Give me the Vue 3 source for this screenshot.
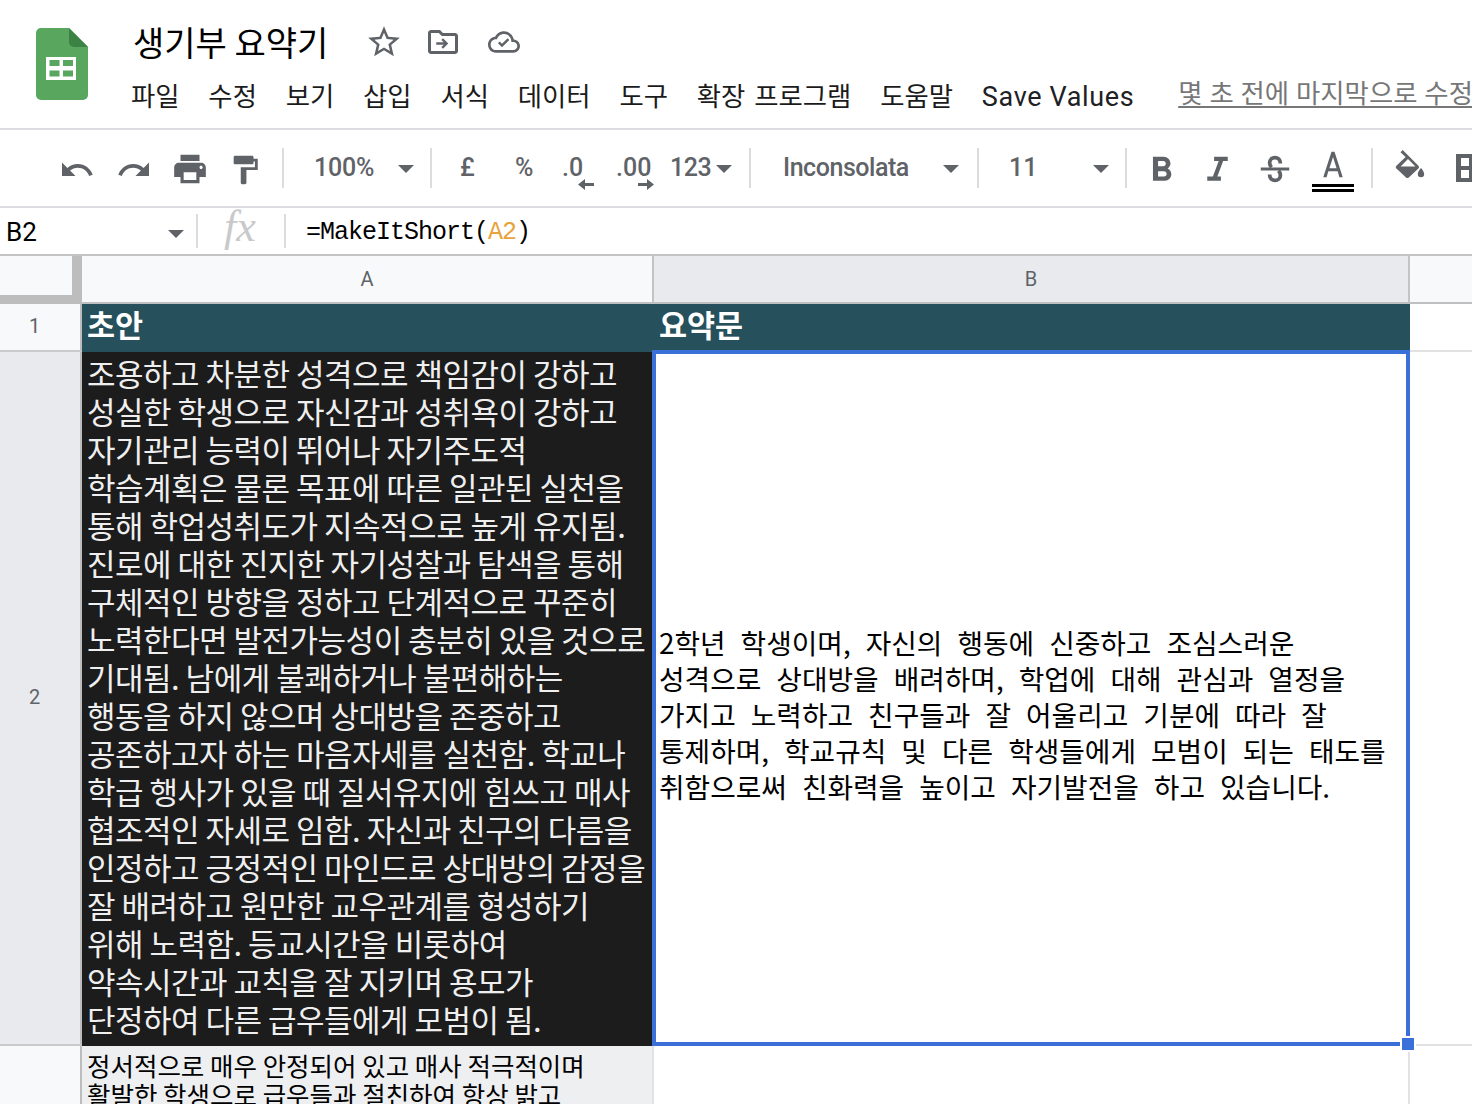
<script setup>
const menus = ['파일','수정','보기','삽입','서식','데이터','도구','확장 프로그램','도움말']
const draft = ['조용하고 차분한 성격으로 책임감이 강하고','성실한 학생으로 자신감과 성취욕이 강하고','자기관리 능력이 뛰어나 자기주도적','학습계획은 물론 목표에 따른 일관된 실천을','통해 학업성취도가 지속적으로 높게 유지됨.','진로에 대한 진지한 자기성찰과 탐색을 통해','구체적인 방향을 정하고 단계적으로 꾸준히','노력한다면 발전가능성이 충분히 있을 것으로','기대됨. 남에게 불쾌하거나 불편해하는','행동을 하지 않으며 상대방을 존중하고','공존하고자 하는 마음자세를 실천함. 학교나','학급 행사가 있을 때 질서유지에 힘쓰고 매사','협조적인 자세로 임함. 자신과 친구의 다름을','인정하고 긍정적인 마인드로 상대방의 감정을','잘 배려하고 원만한 교우관계를 형성하기','위해 노력함. 등교시간을 비롯하여','약속시간과 교칙을 잘 지키며 용모가','단정하여 다른 급우들에게 모범이 됨.']
const summary = ['2학년 학생이며, 자신의 행동에 신중하고 조심스러운','성격으로 상대방을 배려하며, 학업에 대해 관심과 열정을','가지고 노력하고 친구들과 잘 어울리고 기분에 따라 잘','통제하며, 학교규칙 및 다른 학생들에게 모범이 되는 태도를','취함으로써 친화력을 높이고 자기발전을 하고 있습니다.']
const third = ['정서적으로 매우 안정되어 있고 매사 적극적이며','활발한 학생으로 급우들과 절친하여 항상 밝고']
</script>

<template>
  <div class="app">
    <header class="top">
      <svg class="logo" width="52" height="72" viewBox="0 0 52 72">
        <path d="M5 0h28l19 19v48a5 5 0 0 1-5 5H5a5 5 0 0 1-5-5V5a5 5 0 0 1 5-5z" fill="#59a65e"/>
        <path d="M33 0l19 19H38a5 5 0 0 1-5-5z" fill="#3c8245"/>
        <path d="M10 29h30v23H10z" fill="#fff"/>
        <path d="M13.500 32h10v6h-10zM27 32h10v6H27zM13.500 42.500h10v6h-10zM27 42.500h10v6H27z" fill="#59a65e"/>
      </svg>
      <div class="top-main">
        <div class="title-row">
          <span class="title">생기부 요약기</span>
          <svg class="ic-star" width="38" height="38" viewBox="0 0 24 24"><path d="M22 9.240l-7.190-.62L12 2 9.190 8.630 2 9.240l5.460 4.730L5.820 21 12 17.270 18.180 21l-1.630-7.030L22 9.240zM12 15.400l-3.760 2.270 1-4.280-3.320-2.880 4.380-.38L12 6.100l1.710 4.040 4.380.38-3.320 2.880 1 4.280L12 15.400z"/></svg>
          <svg class="ic-folder" width="36" height="36" viewBox="0 0 24 24"><path d="M20 6h-8l-2-2H4c-1.100 0-2 .9-2 2v12c0 1.100.9 2 2 2h16c1.100 0 2-.9 2-2V8c0-1.100-.9-2-2-2zm0 12H4V6h5.170l2 2H20v10z"/><path d="M12 9.500l-1.100 1.100 1.600 1.600H7.500v1.600h5l-1.600 1.600 1.100 1.100 3.500-3.500z"/></svg>
          <svg class="ic-cloud" width="32" height="32" viewBox="0 0 24 24"><path d="M19.350 10.040C18.670 6.590 15.640 4 12 4 9.110 4 6.600 5.640 5.350 8.040 2.340 8.360 0 10.910 0 14c0 3.310 2.690 6 6 6h13c2.760 0 5-2.240 5-5 0-2.640-2.050-4.780-4.650-4.960zM19 18H6c-2.210 0-4-1.790-4-4s1.790-4 4-4h.71C7.370 7.690 9.480 6 12 6c3.040 0 5.500 2.460 5.500 5.500v.5H19c1.660 0 3 1.340 3 3s-1.340 3-3 3z"/><path d="M10.500 16l-3-3 1.300-1.300 1.700 1.700 4.200-4.200 1.300 1.300z"/></svg>
        </div>
        <nav class="menu">
          <span v-for="m in menus" :key="m">{{ m }}</span>
          <span class="latin">Save Values</span>
          <span class="saved">몇 초 전에 마지막으로 수정했습니다</span>
        </nav>
      </div>
    </header>

    <div class="toolbar">
      <svg class="t-undo" width="36" height="36" viewBox="0 0 24 24"><path d="M12.500 8c-2.650 0-5.050.99-6.900 2.600L2 7v9h9l-3.620-3.620c1.390-1.160 3.160-1.880 5.120-1.880 3.540 0 6.550 2.310 7.600 5.500l2.370-.78C21.080 11.030 17.150 8 12.500 8z"/></svg>
      <svg class="t-redo" width="36" height="36" viewBox="0 0 24 24"><path d="M18.400 10.600C16.550 8.990 14.150 8 11.500 8c-4.650 0-8.580 3.030-9.960 7.220L3.900 16c1.050-3.190 4.050-5.500 7.600-5.500 1.950 0 3.730.72 5.120 1.880L13 16h9V7l-3.600 3.600z"/></svg>
      <svg class="t-print" width="38" height="38" viewBox="0 0 24 24"><path d="M19 8H5c-1.660 0-3 1.340-3 3v6h4v4h12v-4h4v-6c0-1.660-1.340-3-3-3zm-3 11H8v-5h8v5zm3-7c-.55 0-1-.45-1-1s.45-1 1-1 1 .45 1 1-.45 1-1 1zm-1-9H6v4h12V3z"/></svg>
      <svg class="t-paint" width="34" height="34" viewBox="0 0 24 24"><path d="M18 4V3c0-.55-.45-1-1-1H5c-.55 0-1 .45-1 1v4c0 .55.45 1 1 1h12c.55 0 1-.45 1-1V6h1v4H9v11c0 .55.45 1 1 1h2c.55 0 1-.45 1-1v-9h8V4h-3z"/></svg>
      <i class="sep s1"></i>
      <span class="tt zoom">100%</span><i class="caret c-zoom"></i>
      <i class="sep s2"></i>
      <span class="tt pound">£</span>
      <span class="tt pct">%</span>
      <span class="dec d1">.0<svg width="16" height="14" viewBox="0 0 16 14"><path d="M7 2v4h9v3H7v4L0 7.500z"/></svg></span>
      <span class="dec d2">.00<svg width="16" height="14" viewBox="0 0 16 14"><path d="M9 2v4H0v3h9v4l7-5.500z"/></svg></span>
      <span class="tt num">123</span><i class="caret c-num"></i>
      <i class="sep s3"></i>
      <span class="tt font">Inconsolata</span><i class="caret c-font"></i>
      <i class="sep s4"></i>
      <span class="tt size">11</span><i class="caret c-size"></i>
      <i class="sep s5"></i>
      <svg class="t-b" width="41" height="41" viewBox="0 0 24 24"><path d="M15.600 10.790c.97-.67 1.650-1.770 1.650-2.790 0-2.260-1.750-4-4-4H7v14h7.040c2.090 0 3.710-1.700 3.710-3.790 0-1.520-.86-2.820-2.150-3.420zM10 6.500h3c.83 0 1.500.67 1.500 1.500s-.67 1.500-1.500 1.500h-3v-3zm3.500 9H10v-3h3.500c.83 0 1.500.67 1.500 1.500s-.67 1.500-1.500 1.500z"/></svg>
      <svg class="t-i" width="41" height="41" viewBox="0 0 24 24"><path d="M10 4v2.500h2.700L9.300 15.500H6V18h8v-2.500h-2.100l3.400-9H18V4z"/></svg>
      <svg class="t-s" width="36" height="36" viewBox="0 0 24 24"><path d="M2.500 11h19v2h-19z"/><path d="M15.600 8.300C15.600 5.800 14 4.400 12 4.400S8.400 5.800 8.400 7.900c0 1.200.5 2.200 1.300 3M8.400 15.700c0 2.500 1.600 3.900 3.600 3.900s3.600-1.400 3.600-3.500c0-1.200-.5-2.200-1.300-3" fill="none" stroke="#5f6368" stroke-width="2.500"/></svg>
      <span class="t-a">
        <svg width="36" height="32" viewBox="0 0 24 21"><path d="M11 1L5.500 18h2.250l1.120-4h6.250l1.120 4h2.250L13 1h-2zm-1.380 11L12 4.500 14.380 12H9.620z"/></svg>
        <i></i>
      </span>
      <i class="sep s6"></i>
      <svg class="t-fill" width="32" height="30" viewBox="0 0 32 30"><path d="M6.500 2.200L8.700 0l5.500 5.500L24.400 15.700c.8.800.8 2 0 2.800l-9.600 9c-.8.800-2 .8-2.800 0l-9.600-9c-.8-.8-.8-2 0-2.800L11.600 7zM14 9l-7.400 7.400h14.800z" fill-rule="evenodd"/><path d="M27 18s-3.200 3.600-3.200 6a3.200 3.200 0 0 0 6.400 0c0-2.400-3.200-6-3.200-6z"/></svg>
      <svg class="t-bd" width="16" height="28" viewBox="0 0 16 28"><path d="M0 0h16v28H0zM5 4v8h8V4zM5 16v8h8v-8z" fill-rule="evenodd"/></svg>
    </div>

    <div class="formula">
      <span class="ref">B2</span><i class="caret c-ref"></i>
      <i class="fsep f1"></i>
      <span class="fx">fx</span>
      <i class="fsep f2"></i>
      <span class="ftext">=MakeItShort(<b>A2</b>)</span>
    </div>

    <div class="sheet">
      <div class="corner"></div>
      <div class="colh">A</div>
      <div class="colh sel">B</div>
      <div class="colh end"></div>

      <div class="rowh">1</div>
      <div class="cell head">초안</div>
      <div class="cell head">요약문</div>
      <div class="cell blank"></div>

      <div class="rowh sel">2</div>
      <div class="cell dark"><div v-for="l in draft" :key="l">{{ l }}</div></div>
      <div class="cell active">
        <div><div v-for="l in summary" :key="l">{{ l }}</div></div>
        <i class="handle"></i>
      </div>
      <div class="cell blank"></div>

      <div class="rowh"></div>
      <div class="cell light"><div v-for="l in third" :key="l">{{ l }}</div></div>
      <div class="cell plain"></div>
      <div class="cell"></div>
    </div>
  </div>
</template>

<style>
html, body { margin: 0; background: #fff; overflow: hidden; }
</style>

<style scoped>
.app { width: 1472px; height: 1104px; overflow: hidden; position: relative; font-family: "Noto Sans CJK KR", "Noto Sans", sans-serif; color: #000; background: #fff; }
svg { fill: #5f6368; display: block; flex: none; }
i { display: block; font-style: normal; }

.top { height: 128px; border-bottom: 2px solid #dcdde3; display: flex; box-sizing: content-box; }
.logo { margin: 28px 0 0 36px; }
.top-main { margin-left: 44px; flex: none; width: 1340px; }
.title-row { display: flex; align-items: center; height: 42px; margin-top: 21px; margin-left: 1px; }
.title { font-size: 34px; line-height: 42px; width: 232px; white-space: nowrap; }
.ic-folder { margin-left: 22px; }
.ic-cloud { margin-left: 27px; }
.menu { display: flex; gap: 28.800px; margin: 12px 0 0 -1px; font-size: 26.400px; line-height: 40px; word-spacing: 3px; white-space: nowrap; color: #1b1b1b; }
.latin { font-family: Roboto, sans-serif; font-size: 27px; letter-spacing: .65px; color: #202124; word-spacing: 0; margin-top: 2px; }
.saved { margin: -3px 0 0 15px; color: #777; word-spacing: 1px; text-decoration: underline; text-decoration-thickness: 2px; text-underline-offset: 3px; }

.toolbar { height: 76px; border-bottom: 2px solid #dcdde3; position: relative; color: #5f6368; }
.toolbar > * { position: absolute; }
.t-undo { left: 59px; top: 22px; }
.t-redo { left: 116px; top: 22px; }
.t-print { left: 171px; top: 20px; }
.t-paint { left: 228px; top: 23px; }
.sep { width: 2px; height: 40px; top: 18px; background: #dadce0; }
.s1 { left: 282px; } .s2 { left: 430px; } .s3 { left: 749px; } .s4 { left: 977px; } .s5 { left: 1125px; } .s6 { left: 1371px; }
.tt { font-family: Roboto, sans-serif; font-size: 25px; line-height: 30px; top: 23px; white-space: nowrap; font-weight: 500; }
.zoom { left: 314px; letter-spacing: -.2px; }
.pound { left: 460px; }
.pct { left: 515px; }
.num { left: 670px; letter-spacing: -.4px; }
.font { left: 783px; letter-spacing: -.45px; }
.size { left: 1009px; }
.caret { width: 0; height: 0; border-left: 8px solid transparent; border-right: 8px solid transparent; border-top: 8px solid #5f6368; position: absolute; }
.toolbar .caret { top: 35px; }
.c-zoom { left: 398px; } .c-num { left: 716px; } .c-font { left: 943px; } .c-size { left: 1093px; }
.dec { font-family: Roboto, sans-serif; font-size: 25px; line-height: 30px; top: 23px; font-weight: 500; }
.dec svg { position: absolute; top: 24px; }
.d1 { left: 562px; } .d1 svg { left: 16px; }
.d2 { left: 616px; } .d2 svg { left: 22px; }
.t-b { left: 1141px; top: 20px; }
.t-i { left: 1197px; top: 20px; }
.t-s { left: 1257px; top: 21px; }
.t-a { left: 1312px; top: 20px; width: 42px; }
.t-a svg { margin: 0 auto; }
.t-a i { height: 2px; border-top: 3px solid #000; border-bottom: 3px solid #000; margin-top: 2px; }
.t-fill { left: 1394px; top: 20px; }
.t-bd { left: 1456px; top: 24px; }

.formula { height: 46px; position: relative; }
.formula > * { position: absolute; }
.ref { left: 6px; top: 5px; font-family: Roboto, sans-serif; font-size: 26px; line-height: 38px; }
.c-ref { left: 168px; top: 22px; }
.fsep { width: 2px; height: 34px; top: 6px; background: #dadce0; }
.f1 { left: 196px; } .f2 { left: 284px; }
.fx { left: 224px; top: -5px; font-family: "Liberation Serif", serif; font-style: italic; font-size: 44px; line-height: 48px; color: #c8c9cb; }
.ftext { left: 306px; top: 6px; font-family: "Liberation Mono", monospace; font-size: 25px; line-height: 38px; letter-spacing: -1px; white-space: pre; }
.ftext b { font-weight: 400; color: #e8a33d; }

.sheet { display: grid; grid-template-columns: 82px 572px 756px 1fr; grid-template-rows: 48px 48px 694px 60px; border-top: 2px solid #c4c4c4; }
.corner { background: #f8f9fa; border-bottom: 9px solid #bdbdbd; border-right: 10px solid #bdbdbd; box-sizing: border-box; }
.colh { background: #f8f9fa; color: #5f6368; font-family: Roboto, sans-serif; font-size: 20px; display: flex; align-items: center; justify-content: center; border-right: 2px solid #c4c4c4; border-bottom: 2px solid #c0c0c0; box-sizing: border-box; }
.colh.sel { background: #e8eaed; }
.colh.end { border-right: 0; }
.rowh { background: #f8f9fa; color: #5f6368; font-family: Roboto, sans-serif; font-size: 20px; display: flex; align-items: center; justify-content: center; border-bottom: 2px solid #c9cacc; border-right: 2px solid #bdbdbd; box-sizing: border-box; padding: 0 11px 2px 0; }
.rowh.sel { background: #e8eaed; }
.cell { box-sizing: border-box; min-width: 0; overflow: hidden; white-space: nowrap; }
.head { background: #25505c; color: #fff; font-weight: 700; font-size: 30.500px; line-height: 40px; padding-left: 5px; }
.dark { background: #1c1c1c; color: #efefef; font-size: 31px; line-height: 38px; padding: 2px 0 0 5px; letter-spacing: -.5px; }
.active { position: relative; overflow: visible; margin: -2px 0 0 -2px; border: 4px solid #3a70d8; background: #fff; display: flex; align-items: center; padding: 31px 0 0 3px; font-size: 27.800px; line-height: 36px; word-spacing: 8.800px; z-index: 1; }
.handle { position: absolute; right: -10px; bottom: -10px; width: 12px; height: 12px; background: #3a70d8; border: 2px solid #fff; }
.blank { border-bottom: 2px solid #e2e2e2; }
.light { background: #eeeff1; font-size: 25.500px; line-height: 28.500px; padding: 5px 0 0 5px; border-right: 2px solid #e2e2e2; }
.plain { border-right: 2px solid #e2e2e2; }
</style>
